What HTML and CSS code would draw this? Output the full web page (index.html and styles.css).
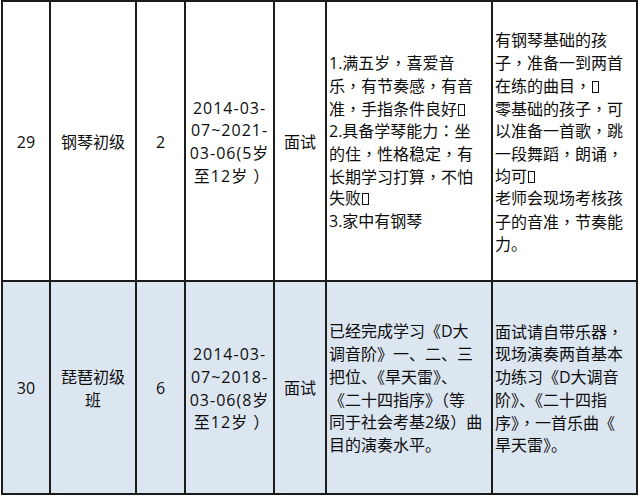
FILE: index.html
```html
<!DOCTYPE html>
<html lang="zh-CN">
<head>
<meta charset="utf-8">
<title>招生表</title>
<link rel="stylesheet" href="styles.css">
</head>
<body>
<div class="sheet">
  <div class="cell c"><div class="txt"><div class="ln">29</div></div></div>
  <div class="cell c"><div class="txt"><div class="ln">钢琴初级</div></div></div>
  <div class="cell c"><div class="txt"><div class="ln">2</div></div></div>
  <div class="cell c date"><div class="txt">
    <div class="ln">2014-03-</div>
    <div class="ln">07~2021-</div>
    <div class="ln">03-06(5岁</div>
    <div class="ln">至12岁<span class="rp">）</span></div>
  </div></div>
  <div class="cell c"><div class="txt"><div class="ln">面试</div></div></div>
  <div class="cell l"><div class="txt">
    <div class="ln">1.满五岁<span class="p" lang="zh-TW">，</span>喜爱音</div>
    <div class="ln">乐<span class="p" lang="zh-TW">，</span>有节奏感<span class="p" lang="zh-TW">，</span>有音</div>
    <div class="ln">准<span class="p" lang="zh-TW">，</span>手指条件良好<span class="tofu"></span></div>
    <div class="ln">2.具备学琴能力<span class="p" lang="zh-TW">：</span>坐</div>
    <div class="ln">的住<span class="p" lang="zh-TW">，</span>性格稳定<span class="p" lang="zh-TW">，</span>有</div>
    <div class="ln">长期学习打算<span class="p" lang="zh-TW">，</span>不怕</div>
    <div class="ln">失败<span class="tofu"></span></div>
    <div class="ln">3.家中有钢琴</div>
  </div></div>
  <div class="cell l"><div class="txt">
    <div class="ln">有钢琴基础的孩</div>
    <div class="ln">子<span class="p" lang="zh-TW">，</span>准备一到两首</div>
    <div class="ln">在练的曲目<span class="p" lang="zh-TW">，</span><span class="tofu"></span></div>
    <div class="ln">零基础的孩子<span class="p" lang="zh-TW">，</span>可</div>
    <div class="ln">以准备一首歌<span class="p" lang="zh-TW">，</span>跳</div>
    <div class="ln">一段舞蹈<span class="p" lang="zh-TW">，</span>朗诵<span class="p" lang="zh-TW">，</span></div>
    <div class="ln">均可<span class="tofu"></span></div>
    <div class="ln">老师会现场考核孩</div>
    <div class="ln">子的音准<span class="p" lang="zh-TW">，</span>节奏能</div>
    <div class="ln">力。</div>
  </div></div>

  <div class="cell c alt"><div class="txt"><div class="ln">30</div></div></div>
  <div class="cell c alt"><div class="txt">
    <div class="ln">琵琶初级</div>
    <div class="ln">班</div>
  </div></div>
  <div class="cell c alt"><div class="txt"><div class="ln">6</div></div></div>
  <div class="cell c alt date"><div class="txt">
    <div class="ln">2014-03-</div>
    <div class="ln">07~2018-</div>
    <div class="ln">03-06(8岁</div>
    <div class="ln">至12岁<span class="rp">）</span></div>
  </div></div>
  <div class="cell c alt"><div class="txt"><div class="ln">面试</div></div></div>
  <div class="cell l alt"><div class="txt">
    <div class="ln">已经完成学习《D大</div>
    <div class="ln">调音阶》一、二、三</div>
    <div class="ln">把位、《旱天雷》、</div>
    <div class="ln">《二十四指序》（等</div>
    <div class="ln">同于社会考基2级）曲</div>
    <div class="ln">目的演奏水平。</div>
  </div></div>
  <div class="cell l alt"><div class="txt">
    <div class="ln">面试请自带乐器<span class="p" lang="zh-TW">，</span></div>
    <div class="ln">现场演奏两首基本</div>
    <div class="ln">功练习《D大调音</div>
    <div class="ln">阶》、《二十四指</div>
    <div class="ln">序》<span class="p" lang="zh-TW">，</span>一首乐曲《</div>
    <div class="ln">旱天雷》。</div>
  </div></div>
</div>
</body>
</html>
```

FILE: styles.css
```css
html, body {
  margin: 0;
  padding: 0;
  background: #ffffff;
}

body {
  font-family: "Open Sans", "Noto Sans CJK SC", sans-serif;
  font-size: 16px;
  color: #0d0d0d;
}

.sheet {
  margin-left: 1px;
  width: 637px;
  box-sizing: border-box;
  display: grid;
  grid-template-columns: 46px 84px 47px 87px 50px 164px 143px;
  grid-template-rows: 278px 211px;
  gap: 2px;
  padding: 2px;
  background: #1c1c1c;
}

.cell {
  background: #ffffff;
  display: flex;
  align-items: center;
  white-space: nowrap;
  overflow: hidden;
}

.cell.alt {
  background: #dce6f1;
}

.cell.c {
  justify-content: center;
  text-align: center;
}

.cell.l {
  justify-content: flex-start;
  text-align: left;
  padding-left: 2px;
}

.cell.date {
  letter-spacing: 1px;
}

.txt {
  display: flex;
  flex-direction: column;
  padding-top: 2px;
}

.ln {
  height: 22.7px;
  line-height: 22.7px;
}

.p {
  font-family: "Noto Sans CJK TC", sans-serif;
}

.rp {
  display: inline-block;
  padding-left: 5px;
  margin-right: -5px;
}

.tofu {
  display: inline-block;
  width: 5px;
  height: 10px;
  border: 1px solid #111111;
  margin-left: 1px;
  vertical-align: -1px;
}
```
